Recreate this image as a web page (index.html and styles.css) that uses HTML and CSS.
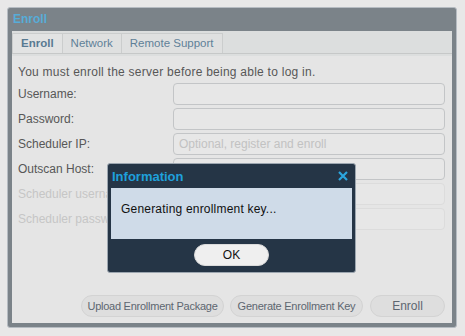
FILE: index.html
```html
<!DOCTYPE html>
<html lang="en">
<head>
  <meta charset="UTF-8" />
  <title>Enroll</title>
  <link rel="stylesheet" href="styles.css">
</head>
<body>
  <div class="window">
    <div class="window-title">Enroll</div>
    <div class="window-body">
      <div class="tabs">
        <div class="tab active">Enroll</div>
        <div class="tab">Network</div>
        <div class="tab">Remote Support</div>
      </div>
      <div class="panel">
        <p class="intro">You must enroll the server before being able to log in.</p>
        <div class="form">
          <label class="label">Username:</label>
          <div class="field"></div>
          <label class="label">Password:</label>
          <div class="field"></div>
          <label class="label">Scheduler IP:</label>
          <div class="field placeholder">Optional, register and enroll</div>
          <label class="label">Outscan Host:</label>
          <div class="field"></div>
          <label class="label disabled">Scheduler username:</label>
          <div class="field disabled"></div>
          <label class="label disabled">Scheduler password:</label>
          <div class="field disabled"></div>
        </div>
        <div class="actions">
          <button class="btn btn-upload">Upload Enrollment Package</button>
          <button class="btn btn-generate">Generate Enrollment Key</button>
          <button class="btn btn-enroll">Enroll</button>
        </div>
      </div>
    </div>
  </div>

  <div class="dialog">
    <div class="dialog-title">
      <span>Information</span>
      <svg class="dialog-close" width="10" height="10" viewBox="0 0 10 10">
        <path d="M1 1 L9 9 M9 1 L1 9" stroke="#2ba6df" stroke-width="2.2" fill="none" />
      </svg>
    </div>
    <div class="dialog-body">Generating enrollment key...</div>
    <div class="dialog-footer">
      <button class="ok">OK</button>
    </div>
  </div>
</body>
</html>
```

FILE: styles.css
```css
body {
  margin: 0;
  background-color: #e8e8e8;
  font-family: 'Liberation Sans', Arial, sans-serif;
  font-size: 12px;
  height: 336px;
  overflow: hidden;
}

.window {
  margin: 7px 0 0 7px;
  width: 450px;
  height: 321px;
  box-sizing: border-box;
  background-color: #7b8389;
  border: 1px solid #b6bcc2;
  border-radius: 3px;
  padding: 0 4px 4px 4px;
  display: flex;
  flex-direction: column;
}

.window-title {
  height: 23px;
  line-height: 22px;
  padding-left: 1px;
  font-weight: bold;
  color: #57acd8;
}

.window-body {
  flex: 1;
  background-color: #e5e5e5;
  display: flex;
  flex-direction: column;
}

.tabs {
  display: flex;
  padding-top: 2px;
  height: 20px;
  background-color: #dcdede;
  border-bottom: 1px solid #c6c8c8;
  box-shadow: 0 2px 0 #dcdede;
}

.tab {
  padding: 0 8px;
  line-height: 19px;
  font-size: 11.5px;
  color: #5f8098;
  border: 1px solid #cbcdcd;
  border-bottom: none;
  background-color: #dfe0e0;
}

.tab + .tab {
  border-left: none;
}

.tab.active {
  font-weight: bold;
  background-color: #e2e3e3;
  color: #587a92;
}

.panel {
  flex: 1;
  display: flex;
  flex-direction: column;
  padding: 10px 7px 6px 6px;
}

.intro {
  margin: 0 0 3px 0;
  line-height: 16px;
  color: #575757;
  letter-spacing: 0.25px;
}

.form {
  display: grid;
  grid-template-columns: 155px 1fr;
  row-gap: 3px;
}

.label {
  line-height: 22px;
  color: #575757;
  white-space: nowrap;
  overflow: hidden;
}

.label.disabled {
  color: #c6c6c6;
}

.field {
  height: 22px;
  box-sizing: border-box;
  border: 1px solid #c3c5c7;
  border-radius: 4px;
  background-color: #e7e7e7;
  padding-left: 5px;
  line-height: 20px;
}

.field.placeholder {
  color: #c2c2c2;
}

.field.disabled {
  border-color: #dcdcdc;
}

.actions {
  margin-top: auto;
  display: flex;
  justify-content: flex-end;
  gap: 6px;
}

.btn {
  height: 22px;
  border: 1px solid #d3d3d3;
  border-radius: 11px;
  background-color: #dedede;
  color: #5d6670;
  font-family: 'Liberation Sans', Arial, sans-serif;
  font-size: 11px;
  letter-spacing: -0.25px;
  white-space: nowrap;
  padding: 0;
}

.btn-upload {
  width: 143px;
}

.btn-generate {
  width: 133px;
}

.btn-enroll {
  width: 75px;
  margin-left: 1px;
  font-size: 12px;
  letter-spacing: 0;
}

.dialog {
  position: absolute;
  left: 107px;
  top: 163px;
  width: 249px;
  height: 110px;
  box-sizing: border-box;
  background-color: #253546;
  border: 1px solid #9ca6b0;
  border-radius: 3px;
  padding: 0 3px;
}

.dialog-title {
  height: 24px;
  display: flex;
  align-items: center;
  justify-content: space-between;
  padding: 0 4px 0 1px;
  font-size: 13px;
  font-weight: bold;
  color: #1fa0dc;
}

.dialog-body {
  height: 51px;
  background-color: #cfdbe8;
  color: #111111;
  line-height: 42px;
  padding-left: 10px;
  letter-spacing: 0.2px;
}

.dialog-footer {
  display: flex;
  justify-content: center;
  padding-top: 5px;
}

.ok {
  width: 75px;
  height: 22px;
  border: 1px solid #dadada;
  border-radius: 11px;
  background-color: #efefef;
  color: #111111;
  font-family: 'Liberation Sans', Arial, sans-serif;
  font-size: 12px;
  padding: 0;
}
```
